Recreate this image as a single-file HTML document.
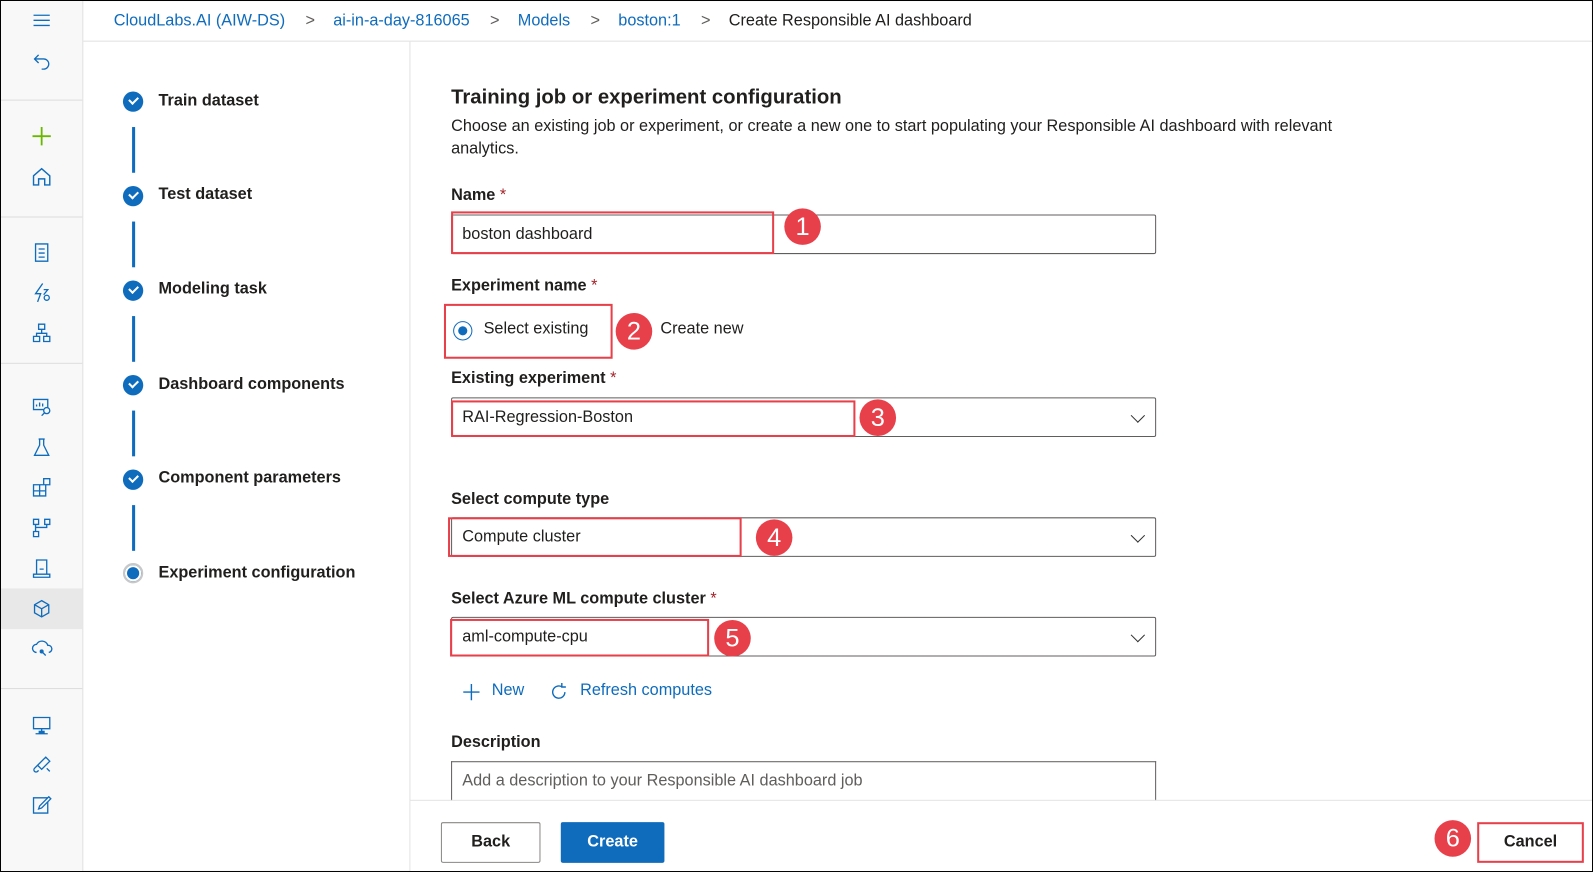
<!DOCTYPE html>
<html><head><meta charset="utf-8"><style>
html,body{margin:0;padding:0;width:1593px;height:872px;overflow:hidden;background:#fff}
#w{position:absolute;left:0;top:0;width:1568px;height:858px;transform:scale(1.01594,1.0163);transform-origin:0 0;font-family:"Segoe UI","Liberation Sans",sans-serif;color:#201f1e;box-sizing:border-box;border:1px solid #000}
.a{position:absolute}
.sb{left:0;top:0;width:80px;height:856px;background:#f8f8f8;border-right:1px solid #e1e1e1}
.hr{position:absolute;left:0;width:80px;height:1px;background:#ddd}
.ic{position:absolute;left:29px;width:22px;height:22px}
.top{left:81px;top:0;right:0;height:39px;border-bottom:1px solid #e1e1e1;font-size:16px;line-height:39px;white-space:nowrap}
.top span{color:#0f6cbd}
.top i{font-style:normal;color:#605e5c;margin:0 18px 0 20px}
.step{position:absolute;left:120px;font-size:16px;font-weight:600;line-height:20px}
.ck{position:absolute;left:120px;width:20px;height:20px;border-radius:50%;background:#0f6cbd}
.vl{position:absolute;left:129px;width:3px;height:45px;background:#0f6cbd}
.lbl{position:absolute;left:443px;font-size:16px;font-weight:600}
.lbl b{color:#a4262c;font-weight:400}
.in{position:absolute;left:443px;width:682px;height:37px;border:1px solid #605e5c;border-radius:2px;font-size:16px;line-height:37px;padding-left:10px;box-sizing:content-box}
.rb{position:absolute;border:2px solid #e8404a}
.n{position:absolute;width:36px;height:36px;border-radius:50%;background:#e8404a;color:#fff;font-size:25px;line-height:37px;text-align:center;font-family:"Liberation Sans",sans-serif}
.chev{position:absolute;right:12px;top:12px;width:9px;height:9px;border-right:1.5px solid #323130;border-bottom:1.5px solid #323130;transform:rotate(45deg)}
.ck::after{content:"";position:absolute;left:6px;top:5px;width:7px;height:4px;border-left:2px solid #fff;border-bottom:2px solid #fff;transform:rotate(-45deg)}
</style></head><body><div id="w">
<div class="a sb">
<svg class="ic" style="top:8px" viewBox="0 0 22 22"><path d="M3 6h16M3 11h16M3 16h16" stroke="#0f6cbd" stroke-width="1.3"/></svg>
<svg class="ic" style="top:48px" viewBox="0 0 22 22"><path d="M8 5L4 9l4 4M4 9h9a5 5 0 010 10h-2" fill="none" stroke="#0f6cbd" stroke-width="1.3"/></svg>
<div class="hr" style="top:97px"></div>
<svg class="ic" style="top:122px" viewBox="0 0 22 22"><path d="M11 2v18M2 11h18" stroke="#6bb700" stroke-width="1.8"/></svg>
<svg class="ic" style="top:162px" viewBox="0 0 22 22"><path d="M3 10l8-7 8 7v9h-5v-6h-6v6H3z" fill="none" stroke="#0f6cbd" stroke-width="1.4"/></svg>
<div class="hr" style="top:212px"></div>
<svg class="ic" style="top:236px" viewBox="0 0 22 22"><path d="M5 3h12v17H5zM8 8h6M8 12h6M8 16h6" fill="none" stroke="#0f6cbd" stroke-width="1.3"/></svg>
<svg class="ic" style="top:276px" viewBox="0 0 22 22"><path d="M12 2L5 12h5l-3 8M13 8h4l-4 5" fill="none" stroke="#0f6cbd" stroke-width="1.3"/><circle cx="16" cy="16" r="2.5" fill="none" stroke="#0f6cbd" stroke-width="1.3"/></svg>
<svg class="ic" style="top:315px" viewBox="0 0 22 22"><path d="M8 3h6v5H8zM3 15h6v5H3zM13 15h6v5h-6zM11 8v4M6 15v-3h10v3" fill="none" stroke="#0f6cbd" stroke-width="1.3"/></svg>
<div class="hr" style="top:356px"></div>
<svg class="ic" style="top:388px" viewBox="0 0 22 22"><path d="M3 4h14v10H3zM6 11V9M9 11V7M12 11V8" fill="none" stroke="#0f6cbd" stroke-width="1.3"/><circle cx="16" cy="15" r="3" fill="#f8f8f8" stroke="#0f6cbd" stroke-width="1.3"/><path d="M14 17l-3 3" stroke="#0f6cbd" stroke-width="1.3"/></svg>
<svg class="ic" style="top:428px" viewBox="0 0 22 22"><path d="M8 3h6M9 3v6l-5 10h14l-5-10V3" fill="none" stroke="#0f6cbd" stroke-width="1.3"/></svg>
<svg class="ic" style="top:467px" viewBox="0 0 22 22"><path d="M3 9h6v6H3zM9 9h6v6H9zM3 15h6v5H3zM9 15h6v5H9zM13 3h6v6h-6z" fill="none" stroke="#0f6cbd" stroke-width="1.3"/></svg>
<svg class="ic" style="top:507px" viewBox="0 0 22 22"><path d="M3 3h5v5H3zM14 3h5v5h-5zM3 15h5v5H3zM5 8v7M16 8v3H5" fill="none" stroke="#0f6cbd" stroke-width="1.3"/></svg>
<svg class="ic" style="top:547px" viewBox="0 0 22 22"><path d="M6 3h10v14H6zM9 12h4M3 20h16v-3H3z" fill="none" stroke="#0f6cbd" stroke-width="1.3"/></svg>
<div class="a" style="left:0;top:578px;width:80px;height:40px;background:#e8e8e8"></div>
<svg class="ic" style="top:587px" viewBox="0 0 22 22"><path d="M11 3l7 4v8l-7 4-7-4V7zM4 7l7 4 7-4M11 11v8" fill="none" stroke="#0f6cbd" stroke-width="1.3"/></svg>
<svg class="ic" style="top:626px" viewBox="0 0 22 22"><path d="M6 15a4 4 0 010-8 6 6 0 0111 1 3.5 3.5 0 011 7" fill="none" stroke="#0f6cbd" stroke-width="1.3"/><circle cx="11" cy="14" r="2" fill="#0f6cbd"/><path d="M11 14l4 4" stroke="#0f6cbd" stroke-width="1.3"/></svg>
<div class="hr" style="top:676px"></div>
<svg class="ic" style="top:702px" viewBox="0 0 22 22"><path d="M3 3h16v11H3zM11 14v3M5 19h12" fill="none" stroke="#0f6cbd" stroke-width="1.3"/><rect x="8" y="16" width="6" height="3" fill="#0f6cbd"/></svg>
<svg class="ic" style="top:741px" viewBox="0 0 22 22"><path d="M15 3l4 4-8 8-4-4zM7 11l-3 3a2 2 0 003 3l1-1M16 14l3 3" fill="none" stroke="#0f6cbd" stroke-width="1.3"/></svg>
<svg class="ic" style="top:780px" viewBox="0 0 22 22"><path d="M3 4h14v15H3z" fill="none" stroke="#0f6cbd" stroke-width="1.3"/><path d="M18 3l2 2-9 9-3 1 1-3z" fill="#f8f8f8" stroke="#0f6cbd" stroke-width="1.3"/></svg>
</div>
<div class="a top"><span style="margin-left:30px">CloudLabs.AI (AIW-DS)</span><i>&gt;</i><span>ai-in-a-day-816065</span><i>&gt;</i><span>Models</span><i>&gt;</i><span>boston:1</span><i>&gt;</i>Create Responsible AI dashboard</div>
<div class="a" style="left:402px;top:40px;width:1px;height:816px;background:#e1e1e1"></div>
<div class="ck" style="top:89px"></div><div class="step" style="left:155px;top:89px">Train dataset</div>
<div class="vl" style="top:124px"></div>
<div class="ck" style="top:182px"></div><div class="step" style="left:155px;top:181px">Test dataset</div>
<div class="vl" style="top:217px"></div>
<div class="ck" style="top:275px"></div><div class="step" style="left:155px;top:274px">Modeling task</div>
<div class="vl" style="top:310px"></div>
<div class="ck" style="top:368px"></div><div class="step" style="left:155px;top:368px">Dashboard components</div>
<div class="vl" style="top:403px"></div>
<div class="ck" style="top:461px"></div><div class="step" style="left:155px;top:460px">Component parameters</div>
<div class="vl" style="top:496px"></div>
<div class="a" style="left:120px;top:553px;width:16px;height:16px;border-radius:50%;border:2px solid #c8c8c8;background:#0f6cbd;box-shadow:inset 0 0 0 2px #fff"></div>
<div class="step" style="left:155px;top:553px">Experiment configuration</div>
<div class="a" style="left:443px;top:84px;font-size:20px;font-weight:600">Training job or experiment configuration</div>
<div class="a" style="left:443px;top:113px;width:925px;font-size:16px;line-height:22px">Choose an existing job or experiment, or create a new one to start populating your Responsible AI dashboard with relevant analytics.</div>
<div class="lbl" style="top:183px">Name <b>*</b></div>
<div class="in" style="top:210px">boston dashboard</div>
<div class="rb" style="left:443px;top:207px;width:314px;height:38px"></div>
<div class="n" style="left:771px;top:204px">1</div>
<div class="lbl" style="top:272px">Experiment name <b>*</b></div>
<div class="rb" style="left:436px;top:298px;width:162px;height:50px"></div>
<div class="a" style="left:445px;top:315px;width:19px;height:19px;border:1.5px solid #0f6cbd;border-radius:50%;box-sizing:border-box"></div>
<div class="a" style="left:450px;top:320px;width:9px;height:9px;border-radius:50%;background:#0f6cbd"></div>
<div class="a" style="left:475px;top:314px;font-size:16px">Select existing</div>
<div class="n" style="left:605px;top:307px">2</div>
<div class="a" style="left:649px;top:314px;font-size:16px">Create new</div>
<div class="lbl" style="top:363px">Existing experiment <b>*</b></div>
<div class="in" style="top:390px">RAI-Regression-Boston<div class="chev"></div></div>
<div class="rb" style="left:443px;top:393px;width:394px;height:32px"></div>
<div class="n" style="left:845px;top:392px">3</div>
<div class="lbl" style="top:482px">Select compute type</div>
<div class="in" style="top:508px">Compute cluster<div class="chev"></div></div>
<div class="rb" style="left:440px;top:508px;width:285px;height:35px"></div>
<div class="n" style="left:743px;top:510px">4</div>
<div class="lbl" style="top:580px">Select Azure ML compute cluster <b>*</b></div>
<div class="in" style="top:606px">aml-compute-cpu<div class="chev"></div></div>
<div class="rb" style="left:442px;top:608px;width:251px;height:33px"></div>
<div class="n" style="left:702px;top:609px">5</div>
<svg class="a" style="left:453px;top:670px" width="20" height="20" viewBox="0 0 20 20"><path d="M10 2v16M2 10h16" stroke="#0f6cbd" stroke-width="1.4"/></svg>
<div class="a" style="left:483px;top:670px;font-size:16px;color:#0f6cbd">New</div>
<svg class="a" style="left:538px;top:669px" width="22" height="22" viewBox="0 0 22 22"><path d="M17 11a6 6 0 11-3-5.2M14 2v4h4" fill="none" stroke="#0f6cbd" stroke-width="1.4"/></svg>
<div class="a" style="left:570px;top:670px;font-size:16px;color:#0f6cbd">Refresh computes</div>
<div class="lbl" style="top:721px">Description</div>
<div class="a" style="left:443px;top:748px;width:682px;height:38px;border:1px solid #605e5c;border-bottom:none;font-size:16px;line-height:38px;padding-left:10px;color:#605e5c">Add a description to your Responsible AI dashboard job</div>
<div class="a" style="left:403px;top:786px;right:0;height:1px;background:#e1e1e1"></div>
<div class="a" style="left:403px;top:787px;right:0;height:69px;background:#fff"></div>
<div class="a" style="left:433px;top:808px;width:96px;height:38px;border:1px solid #8a8886;border-radius:2px;font-size:16px;font-weight:600;line-height:38px;text-align:center">Back</div>
<div class="a" style="left:551px;top:808px;width:102px;height:40px;background:#0f6cbd;border-radius:2px;color:#fff;font-size:16px;font-weight:600;line-height:40px;text-align:center">Create</div>
<div class="n" style="left:1411px;top:806px">6</div>
<div class="rb" style="left:1453px;top:808px;width:101px;height:36px;font-size:16px;font-weight:600;line-height:36px;text-align:center">Cancel</div>
</div></body></html>
